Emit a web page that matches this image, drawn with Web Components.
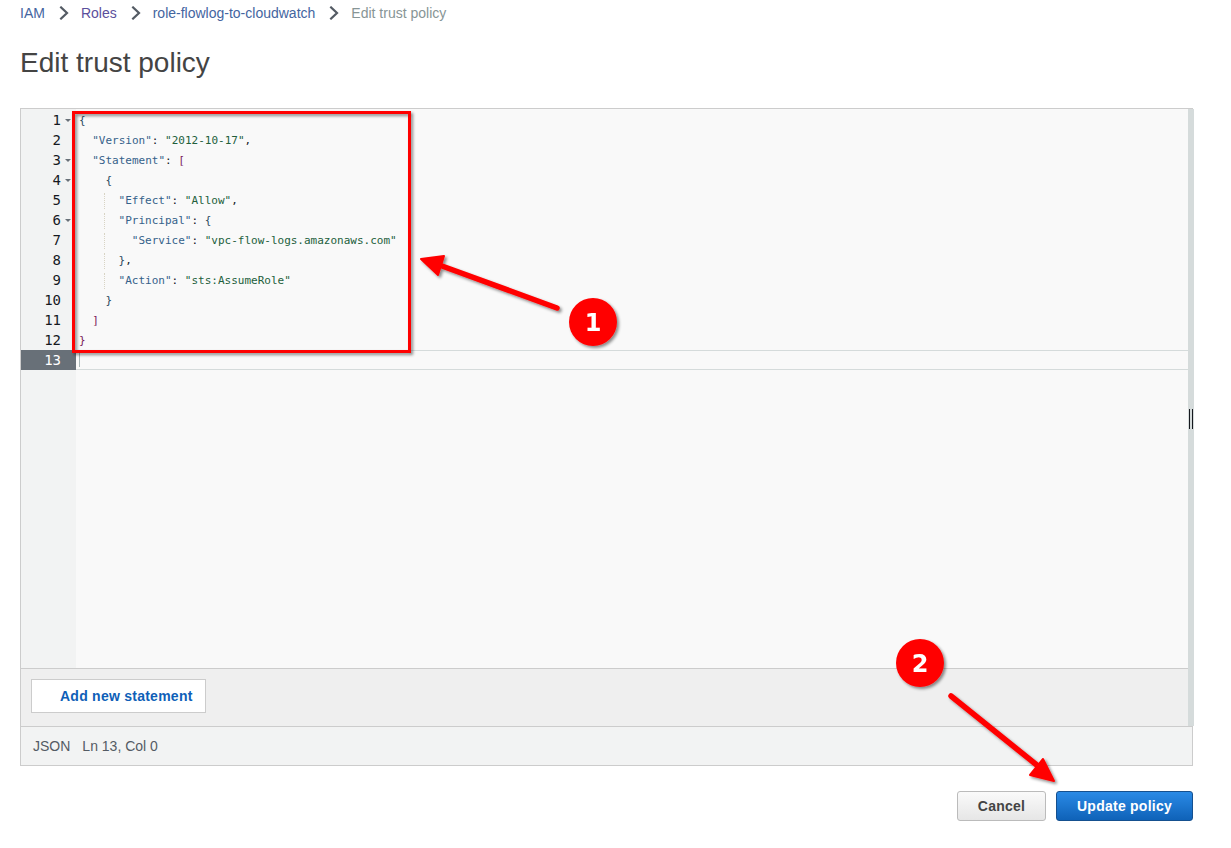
<!DOCTYPE html>
<html>
<head>
<meta charset="utf-8">
<title>Edit trust policy</title>
<style>
html, body { margin: 0; background: #fff; }
body { font-family: "Liberation Sans", Arial, sans-serif; }
</style>
</head>
<body>
<lm-page>
  <lm-breadcrumb slot="crumbs">
    <lm-crumb>IAM</lm-crumb>
    <lm-crumb visited>Roles</lm-crumb>
    <lm-crumb>role-flowlog-to-cloudwatch</lm-crumb>
    <lm-crumb current>Edit trust policy</lm-crumb>
  </lm-breadcrumb>
  <lm-editor slot="editor"></lm-editor>
  <lm-button slot="actions">Cancel</lm-button>
  <lm-button slot="actions" primary>Update policy</lm-button>
</lm-page>
<script>
class PageComponent extends HTMLElement {
    connectedCallback() {
        this.root = this.attachShadow({ mode: "open" });
        this.root.innerHTML = `
<style>
:host { display: block; position: relative; width: 1231px; height: 848px; overflow: hidden; font-family: "Liberation Sans", Arial, sans-serif; }
.wrap { padding: 0 38px 0 20px; display: flex; flex-direction: column; }
h1 { margin: 19px 0 27px; font-size: 28px; line-height: 36px; font-weight: 400; color: #444; }
.actions { display: flex; justify-content: flex-end; gap: 10px; margin-top: 25px; }
svg.marks { position: absolute; left: 0; top: 0; }
.num { font: 700 24px "DejaVu Sans", sans-serif; fill: #fff; text-anchor: middle; }
</style>
<div class="wrap">
    <slot name="crumbs"></slot>
    <h1>Edit trust policy</h1>
    <slot name="editor"></slot>
    <div class="actions"><slot name="actions"></slot></div>
</div>
<svg class="marks" width="1231" height="848" viewBox="0 0 1231 848">
    <defs>
        <filter id="sh" x="-20%" y="-20%" width="140%" height="140%">
            <feDropShadow dx="2" dy="2" stdDeviation="1.5" flood-color="#000" flood-opacity=".45"/>
        </filter>
    </defs>
    <g filter="url(#sh)">
        <rect x="73.5" y="112.5" width="336" height="239" fill="none" stroke="#f00" stroke-width="3"/>
        <path d="M557 308 L442 266" stroke="#f00" stroke-width="5.5" stroke-linecap="round" fill="none"/>
        <path d="M421 259 L444 256 L438 275 Z" fill="#f00" stroke="#f00" stroke-width="2" stroke-linejoin="round"/>
        <circle cx="593" cy="322" r="24" fill="#f00"/>
        <text class="num" x="593" y="331">1</text>
        <path d="M951 696 L1038 766" stroke="#f00" stroke-width="5.5" stroke-linecap="round" fill="none"/>
        <path d="M1054 781 L1030 775 L1043 759 Z" fill="#f00" stroke="#f00" stroke-width="2" stroke-linejoin="round"/>
        <circle cx="920" cy="663" r="24" fill="#f00"/>
        <text class="num" x="920" y="672">2</text>
    </g>
</svg>`;
    }
}
window.customElements.define("lm-page", PageComponent);

class BreadcrumbComponent extends HTMLElement {
    connectedCallback() {
        this.root = this.attachShadow({ mode: "open" });
        this.root.innerHTML = `
<style>
:host { display: flex; align-items: center; height: 26px; font-size: 14px; }
</style>
<slot></slot>`;
    }
}
window.customElements.define("lm-breadcrumb", BreadcrumbComponent);

class CrumbComponent extends HTMLElement {
    connectedCallback() {
        this.root = this.attachShadow({ mode: "open" });
        let current = this.hasAttribute("current");
        this.root.innerHTML = `
<style>
:host { display: inline-flex; align-items: center; color: #44659f; white-space: nowrap; }
:host([visited]) { color: #5b4f9c; }
:host([current]) { color: #879596; }
svg { margin: 0 12px 0 14px; display: block; }
</style>
<slot></slot>${current ? "" : `<svg width="10" height="14" viewBox="0 0 10 14"><path d="M1.3 .7 L8 7 L1.3 13.3" fill="none" stroke="#545b64" stroke-width="2.2"/></svg>`}`;
    }
}
window.customElements.define("lm-crumb", CrumbComponent);

class EditorComponent extends HTMLElement {
    constructor() {
        super();
        // [indent, html, has fold arrow]
        this.lines = [
            [0, `<i>{</i>`, true],
            [1, `<b>"Version"</b>: <s>"2012-10-17"</s>,`, false],
            [1, `<b>"Statement"</b>: <u>[</u>`, true],
            [2, `<i>{</i>`, true],
            [3, `<b>"Effect"</b>: <s>"Allow"</s>,`, false],
            [3, `<b>"Principal"</b>: <i>{</i>`, true],
            [4, `<b>"Service"</b>: <s>"vpc-flow-logs.amazonaws.com"</s>`, false],
            [3, `<i>}</i>,`, false],
            [3, `<b>"Action"</b>: <s>"sts:AssumeRole"</s>`, false],
            [2, `<i>}</i>`, false],
            [1, `<u>]</u>`, false],
            [0, `<u>}</u>`, false],
            [0, ``, false]
        ];
    }
    connectedCallback() {
        this.root = this.attachShadow({ mode: "open" });
        let gutter = this.lines.map((l, i) =>
            `<div class="num ${i === 12 ? "active" : ""}"><span>${i + 1}</span>${l[2] ? "<em></em>" : ""}</div>`).join("");
        let code = this.lines.map((l, i) => {
            let guide = l[0] >= 3 ? `<span class="guide"></span>` : "";
            return `<div class="row ${i === 12 ? "active" : ""}" style="padding-left:${l[0] * 13.2}px">${guide}${l[1]}</div>`;
        }).join("");
        this.root.innerHTML = `
<style>
:host { display: block; }
.box { position: relative; height: 618px; border: 1px solid #ccc; border-bottom: 0; box-sizing: border-box; display: flex; flex-direction: column; background: #f9f9f9; }
.main { flex: 1; display: flex; min-height: 0; }
.gutter { width: 55px; background: #f2f3f3; flex: none; padding-top: 1px; font: 14px/20px "DejaVu Sans Mono", monospace; color: #16191f; }
.num { position: relative; height: 20px; padding-right: 15px; text-align: right; }
.num em { position: absolute; right: 5px; top: 9px; width: 0; height: 0; border: 3px solid transparent; border-top: 3.5px solid #687078; border-bottom: 0; }
.num.active { background: #687078; color: #fff; }
.code { flex: 1; padding-top: 1px; font: 11px/22px "DejaVu Sans Mono", monospace; color: #16191f; white-space: pre; }
.row { position: relative; height: 20px; margin-left: 3px; }
.row.active { margin-left: 0; box-sizing: border-box; height: 20px; border: solid #d5dbdb; border-width: 1px 0; }
.row.active::before { content: ""; position: absolute; left: 3px; top: 2px; bottom: 2px; width: 1px; background: #aab7b8; }
.guide { position: absolute; left: 25px; top: 3px; bottom: 1px; border-left: 1px dotted #d8d4c4; }
b { font-weight: 400; color: #35618a; }
s { text-decoration: none; color: #235f3c; }
i { font-style: normal; color: #2b4a5e; }
u { text-decoration: none; color: #7a1a5a; }
.bar { flex: none; height: 58px; box-sizing: border-box; border-top: 1px solid #ccc; background: #efefef; display: flex; align-items: center; padding: 0 0 4px 10px; }
.add { box-sizing: border-box; width: 175px; height: 34px; background: #fff; border: 1px solid #ccc; color: #0f5fb8; font-size: 14px; font-weight: 700; padding-left: 28px; line-height: 32px; letter-spacing: .25px; }
.scroll { position: absolute; right: -2px; top: 0; bottom: 0; width: 6px; background: #d5dbdb; }
.grip { position: absolute; left: 1px; top: 300px; width: 4px; height: 20px; box-sizing: border-box; border: solid #16191f; border-width: 0 1px; }
.status { box-sizing: border-box; height: 40px; border: 1px solid #ccc; background: #f2f3f3; display: flex; align-items: center; gap: 12px; padding-left: 12px; font-size: 14px; color: #545b64; }
</style>
<div class="box">
    <div class="main">
        <div class="gutter">${gutter}</div>
        <div class="code">${code}</div>
    </div>
    <div class="bar"><div class="add">Add new statement</div></div>
    <div class="scroll"><div class="grip"></div></div>
</div>
<div class="status"><span>JSON</span><span>Ln 13, Col 0</span></div>`;
    }
}
window.customElements.define("lm-editor", EditorComponent);

class ButtonComponent extends HTMLElement {
    connectedCallback() {
        this.root = this.attachShadow({ mode: "open" });
        this.root.innerHTML = `
<style>
:host { display: block; box-sizing: border-box; height: 30px; width: 89px; border: 1px solid #bbb; border-radius: 3px; background: linear-gradient(#fafafa, #e6e6e6); color: #444; font-size: 14px; font-weight: 700; text-align: center; line-height: 29px; letter-spacing: .25px; }
:host([primary]) { width: 137px; border-color: #15508f; background: linear-gradient(#2a8ae6, #0f62b8); color: #fff; }
</style>
<slot></slot>`;
    }
}
window.customElements.define("lm-button", ButtonComponent);
</script>
</body>
</html>
